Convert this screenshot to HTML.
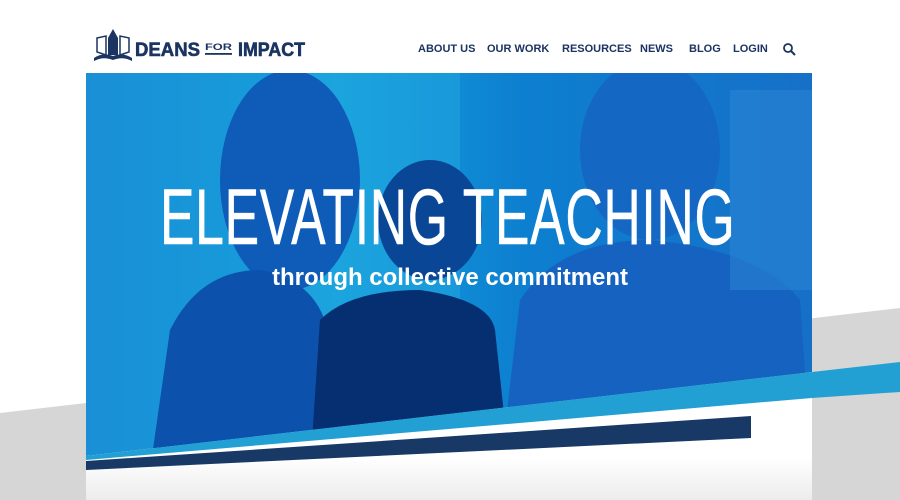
<!DOCTYPE html>
<html><head><meta charset="utf-8"><style>
html,body{margin:0;padding:0;width:900px;height:500px;overflow:hidden;background:#fff;font-family:"Liberation Sans",sans-serif}
.nav{position:absolute;top:43px;font-size:11px;font-weight:bold;color:#1b3461;letter-spacing:0;white-space:nowrap}
.h1{position:absolute;left:160px;top:177px;font-size:79px;color:#fff;line-height:1;white-space:nowrap;transform-origin:0 0;transform:scaleX(0.655);letter-spacing:1px;-webkit-text-stroke:0.5px #fff}
.sub{position:absolute;left:272px;top:264px;font-size:24px;font-weight:bold;color:#fff;white-space:nowrap;letter-spacing:0}
</style></head><body>
<svg width="900" height="500" style="position:absolute;left:0;top:0">
<defs>
<linearGradient id="bg" x1="0" y1="0" x2="1" y2="0">
<stop offset="0" stop-color="#1a8fd6"/><stop offset="0.35" stop-color="#15a0dc"/><stop offset="0.6" stop-color="#0d7fd0"/><stop offset="1" stop-color="#1670c8"/></linearGradient>
<linearGradient id="bot" x1="0" y1="0" x2="0" y2="1"><stop offset="0" stop-color="#fff"/><stop offset="0.9" stop-color="#fff"/><stop offset="1" stop-color="#ececec"/></linearGradient>
<clipPath id="cp"><polygon points="86,73 812,73 812,372 86,456"/></clipPath>
</defs>
<polygon points="0,413 900,308 900,500 0,500" fill="#d6d6d6"/>
<rect x="86" y="73" width="726" height="427" fill="url(#bot)"/>
<g clip-path="url(#cp)">
<rect x="86" y="73" width="726" height="400" fill="url(#bg)"/>
<rect x="300" y="73" width="160" height="380" fill="#22a8e0" opacity="0.5"/>
<ellipse cx="290" cy="180" rx="70" ry="110" fill="#0f5cb8"/>
<path d="M150,470 L170,330 Q200,270 260,270 Q320,280 330,340 L340,470 Z" fill="#0c52ac"/>
<ellipse cx="430" cy="220" rx="52" ry="60" fill="#0a4696"/>
<path d="M310,470 L320,320 Q350,290 420,290 Q490,300 495,330 L510,470 Z" fill="#062f72"/>
<ellipse cx="650" cy="150" rx="70" ry="90" fill="#1468c4"/>
<path d="M500,470 L520,300 Q560,240 650,240 Q760,250 800,300 L812,470 Z" fill="#1662c0"/>
<rect x="730" y="90" width="82" height="200" fill="#2a84d4" opacity="0.6"/>
</g>
<polygon points="86,456 812,372 900,362 900,392 812,398 86,460" fill="#23a0d3"/>
<polygon points="86,461 751,416 751,438 86,470" fill="#183965"/>
<g fill="#1b3461">
<path d="M94,58 Q103,52 113,56 Q123,52 132,58 L132,61 Q123,56 113,60 Q103,56 94,61Z"/>
<path d="M97,38 L106,36 L106,55 L97,52Z" fill="none" stroke="#1b3461" stroke-width="1.5"/>
<path d="M129,38 L120,36 L120,55 L129,52Z" fill="none" stroke="#1b3461" stroke-width="1.5"/>
<rect x="108" y="38" width="10" height="17"/>
<path d="M108,38 L113,29 L118,38Z"/>
</g>
<text x="135" y="56" font-family="Liberation Sans" font-weight="bold" font-size="19" fill="#1b3461" textLength="65" lengthAdjust="spacingAndGlyphs" stroke="#1b3461" stroke-width="0.6">DEANS</text>
<text x="205" y="50" font-family="Liberation Sans" font-weight="bold" font-size="9" fill="#1b3461" textLength="27" lengthAdjust="spacingAndGlyphs">FOR</text>
<rect x="205" y="53" width="27" height="1.8" fill="#1b3461"/>
<text x="238" y="56" font-family="Liberation Sans" font-weight="bold" font-size="19" fill="#1b3461" textLength="67" lengthAdjust="spacingAndGlyphs" stroke="#1b3461" stroke-width="0.6">IMPACT</text>
<circle cx="788" cy="48" r="4" fill="none" stroke="#1b3461" stroke-width="1.8"/>
<line x1="791" y1="51" x2="795" y2="55" stroke="#1b3461" stroke-width="2"/>
</svg>
<div class="nav" style="left:418px">ABOUT US</div>
<div class="nav" style="left:487px">OUR WORK</div>
<div class="nav" style="left:562px">RESOURCES</div>
<div class="nav" style="left:640px">NEWS</div>
<div class="nav" style="left:689px">BLOG</div>
<div class="nav" style="left:733px">LOGIN</div>
<div class="h1">ELEVATING TEACHING</div>
<div class="sub">through collective commitment</div>
</body></html>
